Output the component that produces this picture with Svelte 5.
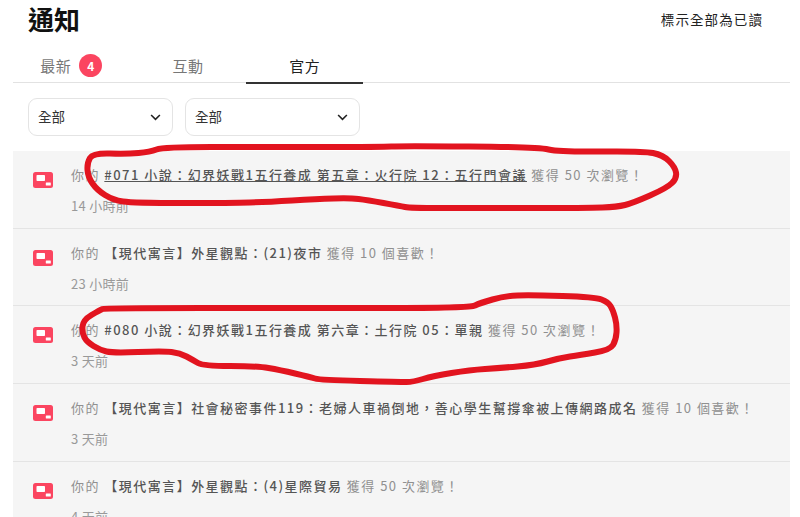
<script>
  const tabs = [
    { label: '最新', badge: 4 },
    { label: '互動' },
    { label: '官方', active: true }
  ];

  const rows = [
    { title: '#071 小說：幻界妖戰1五行養成 第五章：火行院 12：五行門會議', gain: '獲得 50 次瀏覽！', time: '14 小時前', link: true },
    { title: '【現代寓言】外星觀點：(21)夜市', gain: '獲得 10 個喜歡！', time: '23 小時前' },
    { title: '#080 小說：幻界妖戰1五行養成 第六章：土行院 05：單親', gain: '獲得 50 次瀏覽！', time: '3 天前' },
    { title: '【現代寓言】社會秘密事件119：老婦人車禍倒地，善心學生幫撐傘被上傳網路成名', gain: '獲得 10 個喜歡！', time: '3 天前' },
    { title: '【現代寓言】外星觀點：(4)星際貿易', gain: '獲得 50 次瀏覽！', time: '4 天前' }
  ];

  // hand-drawn marks over the list, as traced points
  const strokes = [
    [[93,153],[127,154],[150,152],[163,147],[260,147],[383,147],[400,146],[537,147],[560,152],[643,151],[663,155],[675,167],[677,178],[667,188],[633,203],[617,207],[588,208],[470,208],[410,208],[400,206],[367,200],[350,198],[317,199],[267,202],[233,203],[133,203],[113,200],[97,190],[88,177],[87,163]],
    [[100,310],[105,308],[300,308],[470,308],[480,303],[505,296],[530,295],[595,297],[608,302],[613,310],[617,325],[616,340],[610,350],[580,355],[560,358],[535,365],[500,368],[470,370],[433,376],[413,382],[400,382],[320,380],[310,377],[280,370],[257,366],[203,366],[193,360],[180,353],[163,351],[113,353],[100,350],[87,342],[82,333],[83,320]]
  ];

  // smooth a closed loop through the midpoints of its segments
  function smooth(pts) {
    const mid = (a, b) => [(a[0] + b[0]) / 2, (a[1] + b[1]) / 2];
    const start = mid(pts[pts.length - 1], pts[0]);
    let d = `M${start[0]} ${start[1]}`;
    pts.forEach((p, i) => {
      const m = mid(p, pts[(i + 1) % pts.length]);
      d += ` Q${p[0]} ${p[1]} ${m[0]} ${m[1]}`;
    });
    return d + ' Z';
  }

  const marks = strokes.map(smooth);
</script>

<div class="page">
  <header class="top">
    <h1>通知</h1>
    <button class="mark-read">標示全部為已讀</button>
  </header>

  <nav class="tabs">
    {#each tabs as tab}
      <div class="tab" class:active={tab.active}>
        <span>{tab.label}</span>
        {#if tab.badge}<span class="badge">{tab.badge}</span>{/if}
      </div>
    {/each}
  </nav>

  <div class="filters">
    <div class="select first">
      <span>全部</span>
      <svg viewBox="0 0 12 8" width="11" height="7"><path d="M1 1.2 6 6.2 11 1.2" fill="none" stroke="#222" stroke-width="1.8" /></svg>
    </div>
    <div class="select second">
      <span>全部</span>
      <svg viewBox="0 0 12 8" width="11" height="7"><path d="M1 1.2 6 6.2 11 1.2" fill="none" stroke="#222" stroke-width="1.8" /></svg>
    </div>
  </div>

  <ul class="list">
    {#each rows as row}
      <li class="row">
        <svg class="icon" viewBox="0 0 20 16" width="20" height="16">
          <rect width="20" height="16" rx="2.5" fill="#fb4560" />
          <rect x="3.5" y="3" width="8.5" height="6" rx="0.8" fill="#fff" />
          <rect x="12.8" y="10.5" width="5" height="3" rx="0.5" fill="#fff" />
        </svg>
        <div class="body">
          <p class="line">你的 <span class="title" class:link={row.link}>{row.title}</span> {row.gain}</p>
          <p class="time">{row.time}</p>
        </div>
      </li>
    {/each}
  </ul>

  <svg class="marks" viewBox="0 0 800 517" width="800" height="517">
    {#each marks as d}
      <path {d} fill="none" stroke="#e2141f" stroke-width="6" stroke-linejoin="round" />
    {/each}
  </svg>
</div>

<style>
  :global(body) {
    margin: 0;
    background: #fff;
  }
  .page {
    position: relative;
    width: 800px;
    height: 517px;
    overflow: hidden;
    box-sizing: border-box;
    padding: 0 10px 0 13px;
    font-family: "Noto Sans CJK TC", "Noto Sans", sans-serif;
    color: #222;
  }
  .top {
    display: flex;
    justify-content: space-between;
    align-items: center;
    height: 42px;
    padding: 0 27px 0 15px;
  }
  h1 {
    margin: -4px 0 0;
    font-size: 26px;
    font-weight: 700;
    line-height: 42px;
    color: #111;
  }
  .mark-read {
    border: 0;
    background: none;
    padding: 0;
    font: inherit;
    font-size: 13.5px;
    letter-spacing: 1.1px;
    color: #222;
    margin-top: -5px;
  }
  .tabs {
    display: flex;
    height: 41px;
    border-bottom: 1.5px solid #e2e2e2;
    box-sizing: border-box;
  }
  .tab {
    position: relative;
    width: 116.7px;
    display: flex;
    align-items: center;
    justify-content: center;
    gap: 8px;
    font-size: 15px;
    letter-spacing: 0.5px;
    color: #777;
    padding-top: 6px;
  }
  .tab.active {
    color: #222;
  }
  .tab.active::after {
    content: '';
    position: absolute;
    left: 0;
    right: 0;
    bottom: -1.5px;
    height: 2px;
    background: #333;
  }
  .badge {
    width: 23px;
    height: 23px;
    border-radius: 50%;
    background: #fb4560;
    color: #fff;
    font-size: 12px;
    font-weight: 700;
    display: flex;
    align-items: center;
    justify-content: center;
    letter-spacing: 0;
  }
  .filters {
    display: flex;
    gap: 12px;
    padding: 15px 0 15px 15px;
  }
  .select {
    box-sizing: border-box;
    height: 38px;
    border: 1px solid #e4e4e4;
    border-radius: 9px;
    display: flex;
    align-items: center;
    justify-content: space-between;
    padding: 0 11px 2px 9px;
    font-size: 13.5px;
    color: #333;
  }
  .select svg {
    margin-top: 2px;
  }
  .first { width: 145px; }
  .second { width: 175px; }
  .list {
    list-style: none;
    margin: 0;
    padding: 0;
    background: #f5f5f5;
  }
  .row {
    box-sizing: border-box;
    height: 77.7px;
    display: flex;
    align-items: flex-start;
    gap: 18px;
    padding: 21px 0 0 20px;
    border-bottom: 1px solid #e4e4e4;
  }
  .icon {
    flex: none;
  }
  .body {
    min-width: 0;
  }
  p {
    margin: 0;
    white-space: nowrap;
  }
  .line {
    font-size: 13px;
    letter-spacing: 1.47px;
    line-height: 18px;
    color: #909090;
    margin-top: -6px;
  }
  .title {
    color: #555;
    font-weight: 500;
  }
  .title.link {
    text-decoration: underline;
  }
  .time {
    font-size: 13px;
    letter-spacing: 0.3px;
    color: #999;
    line-height: 18px;
    margin-top: 13px;
  }
  .marks {
    position: absolute;
    left: 0;
    top: 0;
    pointer-events: none;
  }
</style>
